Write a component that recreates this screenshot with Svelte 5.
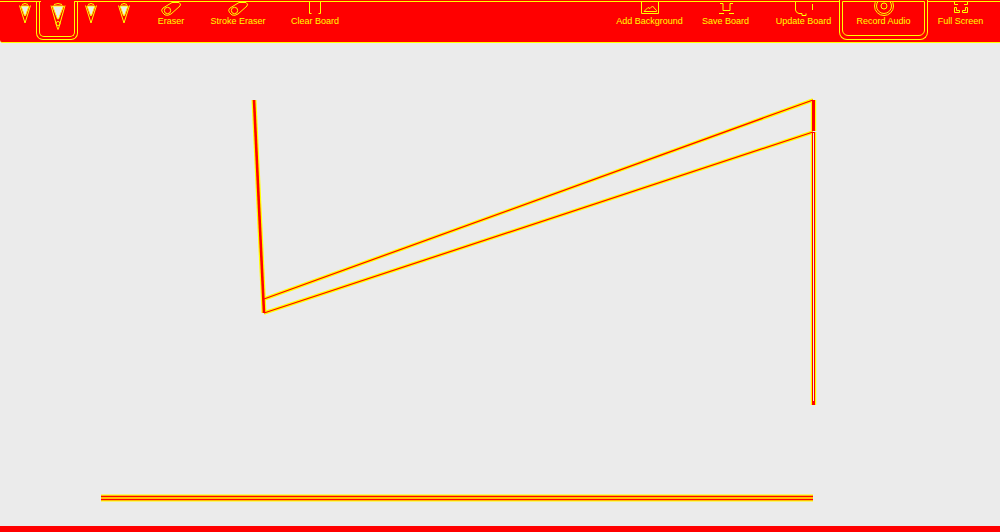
<script>
  const strokes = [
    { d: 'M254 100 L264 313', w: 2.6 },
    { d: 'M264 299 L813 100', w: 1.2 },
    { d: 'M264 313 L813 132', w: 1.2 },
    { d: 'M813.5 100 L813.5 131', w: 3 },
    { d: 'M813.5 132 L813.5 405', w: 3 },
    { d: 'M101 496.5 H813', w: 1.6 },
    { d: 'M101 499.5 H813', w: 1.6 }
  ];
  const pencils = [
    { active: false, big: false },
    { active: true, big: true },
    { active: false, big: false },
    { active: false, big: false }
  ];
</script>

{#snippet pencil(big)}
  {#if big}
    <svg class="pen big" viewBox="0 0 16 30" aria-hidden="true">
      <path class="ln" d="M1 3.5 L7 25 M15 3.5 L9 25 M7 25 L8 27.5 L9 25" />
      <path class="gr" d="M2.5 4 H13.5 L8.5 17 H7.5 Z" />
      <path class="ln" d="M4 2.5 Q8 0.5 12 2.5" />
      <circle class="ln" cx="8" cy="21.5" r="2" />
    </svg>
  {:else}
    <svg class="pen" viewBox="0 0 14 24" aria-hidden="true">
      <path class="ln" d="M1.5 3.5 L7 21 L12.5 3.5" />
      <path class="gr" d="M3 4 H11 L7.5 13.5 H6.5 Z" />
      <path class="ln" d="M4 2.5 Q7 0.5 10 2.5" />
    </svg>
  {/if}
{/snippet}

{#snippet eraser()}
  <svg class="ico" viewBox="0 0 22 16" aria-hidden="true">
    <path class="ln" d="M12 1.5 L19 1.5 Q21.5 3 20 5 L11 13 Q8 15 5 14 L2.5 11.5 Q0.5 9 3 7 Z" />
    <circle class="ln" cx="7.5" cy="9.5" r="3.2" />
  </svg>
{/snippet}

<div class="page">
  <header class="toolbar">
    <div class="row">
      <div class="pens">
        {#each pencils as p}
          <div class={p.active ? 'pen-btn active' : 'pen-btn'}>{@render pencil(p.big)}</div>
        {/each}
      </div>

      <button class="tool eraser-tool">{@render eraser()}<span>Eraser</span></button>
      <button class="tool shadow-tool">{@render eraser()}<span>Stroke Eraser</span></button>
      <button class="tool clear-tool">
        <svg class="ico" viewBox="0 0 22 16" aria-hidden="true">
          <path class="ln" d="M5.5 0 V12.5 H7.5 M16.5 0 V12.5 H14.5" />
        </svg>
        <span>Clear Board</span>
      </button>

      <div class="spacer"></div>

      <button class="tool add-tool">
        <svg class="ico" viewBox="0 0 22 16" aria-hidden="true">
          <path class="ln" d="M2.5 0 V12.5 H19.5 V0" />
          <path class="ln" d="M5 10.5 L9 6.5 L11 7.5 L13.5 5 L17.5 9.5 V10.5 Z" />
        </svg>
        <span>Add Background</span>
      </button>
      <button class="tool save-tool">
        <svg class="ico" viewBox="0 0 22 16" aria-hidden="true">
          <path class="ln" d="M5 2.5 H8 V9.5 H15 V2.5 H18 M4 12.5 H9 M14 12.5 H19" />
        </svg>
        <span>Save Board</span>
      </button>
      <button class="tool undo-tool">
        <svg class="ico" viewBox="0 0 22 16" aria-hidden="true">
          <path class="ln" d="M2.5 0 V9 Q3 12 6 12.5 H9 V14.5 H13 V12.5 M19.5 3 V9" />
        </svg>
        <span>Update Board</span>
      </button>
      <div class="tool record-tool">
        <svg class="ico" viewBox="0 0 22 16" aria-hidden="true">
          <circle class="ln" cx="11" cy="5" r="9.5" />
          <circle class="ln" cx="11" cy="5" r="7.5" />
          <circle class="ln" cx="11" cy="5" r="3" />
        </svg>
        <span>Record Audio</span>
      </div>
      <button class="tool full-tool">
        <svg class="ico" viewBox="0 0 22 16" aria-hidden="true">
          <path class="ln" d="M4.5 6.5 V11.5 H9.5 V9.5 H6.5 V6.5 Z M17.5 6.5 V11.5 H12.5 V9.5 H15.5 V6.5 Z M4.5 0 V3.5 H8 M17.5 0 V3.5 H14" />
        </svg>
        <span>Full Screen</span>
      </button>
    </div>
  </header>

  <main class="canvas">
    <svg class="drawing" viewBox="0 0 1000 483" aria-hidden="true">
      <g transform="translate(0 -43)">
        {#each strokes as s}
          <path class="halo" d={s.d} stroke-width={s.w + 2.4} />
        {/each}
        {#each strokes as s}
          <path class="core" d={s.d} stroke-width={s.w} />
        {/each}
        <path class="split" d="M813.5 133 V401" />
      </g>
    </svg>
  </main>

  <footer class="footer"></footer>
</div>

<style>
  :global(body) {
    margin: 0;
    background: #ebebeb;
  }

  .page {
    width: 1000px;
    height: 532px;
    display: flex;
    flex-direction: column;
    overflow: hidden;
  }

  .toolbar {
    height: 41px;
    padding-top: 1px;
    background: #ff0000;
    border-bottom: 1px solid #ffff00;
    border-bottom-left-radius: 3px;
    flex: none;
  }

  .row {
    height: 40px;
    display: flex;
    border-top: 1px solid #ffff00;
    padding-right: 7px;
  }

  .pens {
    display: flex;
    padding-left: 8px;
    width: 144px;
    box-sizing: border-box;
    flex: none;
  }

  .pen-btn {
    width: 33px;
    height: 39px;
    display: flex;
    justify-content: center;
    position: relative;
    box-sizing: border-box;
  }

  .pen-btn.active {
    margin-top: -1px;
    background: #ff0000;
    padding-top: 1px;
  }

  .pen-btn.active::before {
    content: '';
    position: absolute;
    inset: 0 -4px 0 -5px;
    border: 1px solid #ffff00;
    border-top: 0;
    border-radius: 0 0 7px 7px;
  }

  .pen-btn.active::after {
    content: '';
    position: absolute;
    inset: 0 -1px 3px -2px;
    border: 1px solid #ffff00;
    border-top: 0;
    border-radius: 0 0 5px 5px;
  }

  .pen {
    width: 14px;
    height: 24px;
    display: block;
    position: relative;
    z-index: 1;
  }

  .pen.big {
    width: 16px;
    height: 30px;
  }

  .ln {
    fill: none;
    stroke: #ffff00;
    stroke-width: 1;
  }

  .gr {
    fill: #ebebeb;
    stroke: #ffff00;
    stroke-width: 1;
  }

  .tool {
    background: none;
    border: 0;
    padding: 0;
    margin: -1px 0 0;
    display: flex;
    flex-direction: column;
    align-items: center;
    height: 40px;
    box-sizing: border-box;
    font: 9px "Liberation Sans", Arial, sans-serif;
    color: #ffff00;
    flex: none;
  }

  .ico {
    width: 22px;
    height: 16px;
    display: block;
    flex: none;
  }

  .tool span {
    line-height: 10px;
    white-space: nowrap;
    margin-top: 0;
    transform: translateY(-1px);
  }

  .eraser-tool { width: 54px; }
  .shadow-tool { width: 80px; }
  .clear-tool { width: 74px; }
  .spacer { flex: 1; }
  .add-tool { width: 67px; }
  .save-tool { width: 85px; }
  .undo-tool { width: 71px; }
  .full-tool { width: 65px; }

  .record-tool {
    width: 89px;
    height: 40px;
    margin-top: -2px;
    padding-top: 1px;
    position: relative;
    background: #ff0000;
    border: 1px solid #ffff00;
    border-top: 0;
    border-radius: 0 0 8px 8px;
  }

  .record-tool::after {
    content: '';
    position: absolute;
    inset: 1px 2px 3px 2px;
    border: 1px solid #ffff00;
    border-radius: 0 0 6px 6px;
    pointer-events: none;
  }

  .canvas {
    flex: 1;
    min-height: 0;
  }

  .drawing {
    display: block;
    width: 1000px;
    height: 483px;
  }

  .halo, .core, .split {
    fill: none;
  }

  .halo { stroke: #ffff00; }
  .core { stroke: #ff0000; }
  .split { stroke: #ebebeb; stroke-width: 1; }

  .footer {
    height: 6px;
    background: #ff0000;
    flex: none;
  }
</style>
